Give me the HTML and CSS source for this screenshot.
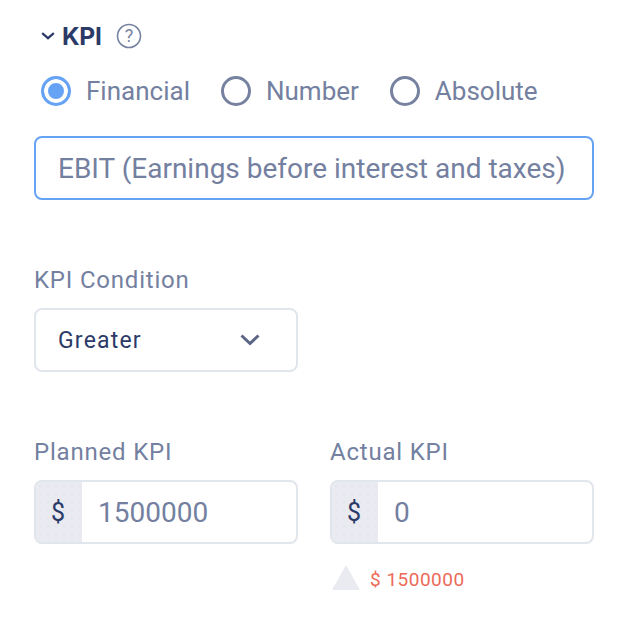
FILE: index.html
```html
<!DOCTYPE html>
<html lang="en">
<head>
<meta charset="utf-8">
<title>KPI</title>
<link rel="stylesheet" href="styles.css">
</head>
<body>
<main class="form">
  <header class="head">
    <svg class="caret" width="14" height="8" viewBox="0 0 14 8"><path d="M1.2 1.2 L7 6.2 L12.8 1.2" fill="none" stroke="#2b3a67" stroke-width="2.2"/></svg>
    <h1 class="title">KPI</h1>
    <svg class="help" width="26" height="26" viewBox="0 0 26 26"><circle cx="13" cy="13" r="11.5" fill="none" stroke="#76829f" stroke-width="1.6"/><text x="13" y="19" text-anchor="middle" class="help-q">?</text></svg>
  </header>
  <div class="radios">
    <label class="radio"><span class="dot on"></span>Financial</label>
    <label class="radio"><span class="dot"></span>Number</label>
    <label class="radio"><span class="dot"></span>Absolute</label>
  </div>
  <div class="select-main">EBIT (Earnings before interest and taxes)</div>
  <label class="label cond">KPI Condition</label>
  <div class="dropdown">
    <span>Greater</span>
    <svg width="20" height="12" viewBox="0 0 20 12"><path d="M1.5 1.5 L10 9.5 L18.5 1.5" fill="none" stroke="#5b6686" stroke-width="3"/></svg>
  </div>
  <div class="cols">
    <div class="col">
      <label class="label">Planned KPI</label>
      <div class="money"><span class="prefix">$</span><span class="value">1500000</span></div>
    </div>
    <div class="col">
      <label class="label">Actual KPI</label>
      <div class="money"><span class="prefix">$</span><span class="value">0</span></div>
      <div class="delta">
        <svg class="delta-mark" width="28" height="25" viewBox="0 0 28 25"><path d="M14 0 L28 25 L0 25 Z" fill="#e9ebf1"/></svg>
        <span class="delta-text">$ 1500000</span>
      </div>
    </div>
  </div>
</main>
</body>
</html>
```
FILE: styles.css
```css
* { box-sizing: border-box; }
html, body { margin: 0; background: #fff; }
body { font-family: Roboto, "Liberation Sans", sans-serif; color: #74809f; height: 618px; overflow: hidden; }
.form { padding: 20px 34px 0; width: 628px; }
.head { display: flex; align-items: center; height: 32px; padding-left: 7px; }
.caret { margin-right: 7px; }
.title { margin: 0; font: 700 24.5px/32px Inter, Roboto, sans-serif; color: #2b3a67; letter-spacing: -0.3px; }
.help { margin-left: 15px; }
.help-q { font: 400 18px Roboto, sans-serif; fill: #76829f; }
.radios { display: flex; align-items: center; gap: 31px; margin-top: 24px; padding-left: 7px; height: 30px; font-size: 26px; }
.radio { display: flex; align-items: center; gap: 15px; }
.dot { width: 30px; height: 30px; border: 3px solid #76829f; border-radius: 50%; background: #fff; }
.dot.on { border-color: #66a3f5; background: #66a3f5; box-shadow: inset 0 0 0 4px #fff; }
.select-main { margin-top: 30px; width: 560px; height: 64px; border: 2px solid #66a3f5; border-radius: 8px; padding: 0 22px; font-size: 28px; line-height: 62px; white-space: nowrap; }
.label { display: block; font-size: 24px; line-height: 28px; letter-spacing: 0.8px; }
.cond { margin-top: 66px; }
.dropdown { margin-top: 14px; width: 264px; height: 64px; border: 2px solid #e1e5ec; border-radius: 8px; padding: 0 36px 0 22px; display: flex; align-items: center; justify-content: space-between; font-size: 23px; letter-spacing: 1.2px; color: #2b3a67; }
.cols { display: flex; gap: 32px; margin-top: 66px; }
.col { width: 264px; }
.money { margin-top: 14px; height: 64px; border: 2px solid #e1e5ec; border-radius: 8px; overflow: hidden; display: flex; align-items: center; }
.prefix { width: 46px; height: 100%; background-color: #e9ebf1; background-image: radial-gradient(#e2e5ec 1px, transparent 1px); background-size: 8px 8px; color: #2b3a67; font-size: 25px; display: flex; align-items: center; justify-content: center; padding-right: 2px; }
.value { padding-left: 16px; font-size: 28px; }
.delta { display: flex; align-items: center; gap: 10px; margin-top: 19px; color: #ec6a58; font-size: 19px; letter-spacing: 0.5px; }
.delta-mark { margin-left: 2px; }
.delta-text { padding-top: 5px; }
```
